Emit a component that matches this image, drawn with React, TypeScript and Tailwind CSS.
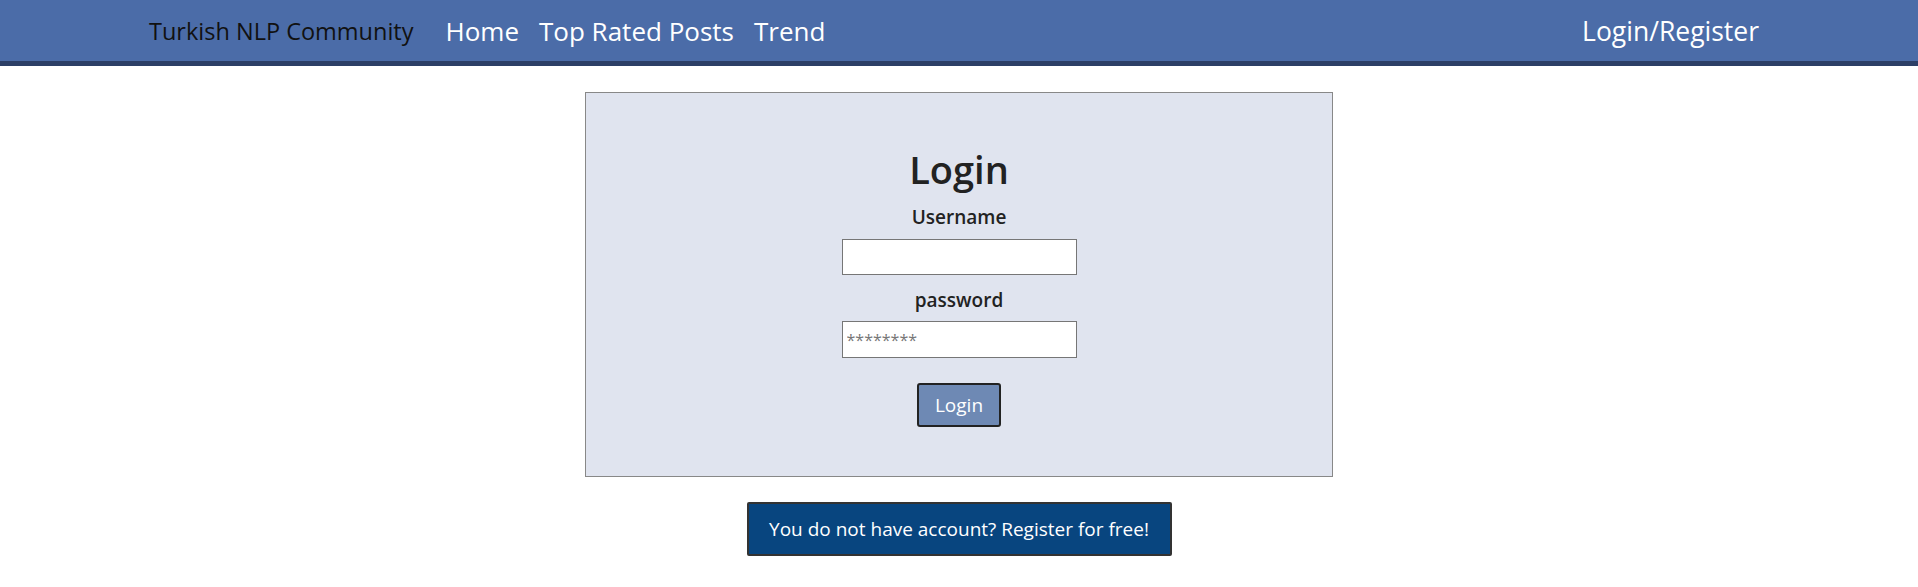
export default function App() {
  return (
    <div className="min-h-[587px] bg-white font-['Open_Sans',sans-serif]">
      <nav className="flex h-[66px] items-center border-b-[5px] border-[#2c3f66] bg-[#4b6ca8] pl-[149px] pr-[159px]">
        <span className="pt-[2px] text-[23.5px] text-[#111]">Turkish NLP Community</span>
        <div className="ml-[32px] flex gap-[20px] pt-[2px] text-[26px] text-white">
          <a>Home</a>
          <a>Top Rated Posts</a>
          <a>Trend</a>
        </div>
        <a className="ml-auto pt-[2px] text-[26.5px] text-white">Login/Register</a>
      </nav>

      <div className="flex flex-col items-center pt-[26px]">
        <form className="flex h-[385px] w-[748px] flex-col items-center border border-[#888] bg-[#e0e4ef] pt-[52px] text-[#222]">
          <h2 className="text-[38px] font-semibold leading-[48px]">Login</h2>
          <label className="mt-[11px] text-[19px] font-semibold leading-[26px]">Username</label>
          <input
            type="text"
            className="mt-[9px] h-[36px] w-[235px] border border-[#767676] bg-white px-[4px]"
          />
          <label className="mt-[12px] text-[19px] font-semibold leading-[26px]">password</label>
          <input
            type="password"
            placeholder="********"
            className="mt-[8px] h-[37px] w-[235px] border border-[#767676] bg-white px-[4px] text-[16px] placeholder:text-[#777]"
          />
          <button
            type="button"
            className="mt-[25px] h-[44px] w-[84px] rounded-[3px] border-2 border-[#222] bg-[#6e89b4] text-[19px] text-white"
          >
            Login
          </button>
        </form>

        <button
          type="button"
          className="mt-[25px] h-[54px] w-[425px] rounded-[2px] border-2 border-[#333] bg-[#08457f] text-[19px] text-white"
        >
          You do not have account? Register for free!
        </button>
      </div>
    </div>
  );
}
